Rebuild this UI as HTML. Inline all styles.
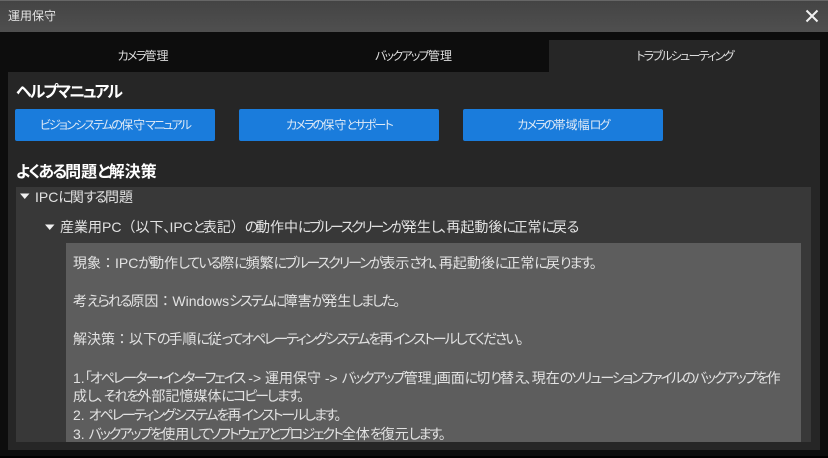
<!DOCTYPE html>
<html lang="ja"><head><meta charset="utf-8">
<style>
html,body{margin:0;padding:0;background:#000}
#w{position:relative;width:828px;height:458px;overflow:hidden;background:#0d0d0d;font-family:"Liberation Sans","Noto Sans CJK JP",sans-serif;font-feature-settings:"palt";color:#e0e0e0}
.b{position:absolute}
.t{position:absolute;white-space:nowrap;line-height:20px;height:20px}
.l{font-size:14px;color:#e2e2e2}
i{font-style:normal;letter-spacing:-2px}
u{text-decoration:none;font-feature-settings:"palt" 0}
.n i{letter-spacing:-2.3px}
.m i{letter-spacing:-2.06px}
.p i{letter-spacing:-1.95px}
.btn{position:absolute;top:109px;width:200px;height:32px;background:#1a7cdc;border-radius:2px;color:#dfeaf6;font-size:12px;line-height:32px;text-align:center;white-space:nowrap}
.tab{position:absolute;top:32px;height:40px;line-height:48px;font-size:12px;text-align:center;color:#ddd;white-space:nowrap}
.btn i{letter-spacing:-1.8px}
.tab i{letter-spacing:-1.7px}
.h{font-size:16px;font-weight:bold;color:#fff}
.h i{letter-spacing:-1.9px}
</style></head><body>
<div id="w">
<div class="b" style="left:0;top:0;width:828px;height:32px;background:linear-gradient(#444,#4f4f4f);border-top:1px solid #666;box-sizing:border-box"></div>
<div class="t" style="left:8px;top:6px;font-size:12px;color:#e4e4e4">運用保守</div>
<svg class="b" style="left:805px;top:9px" width="14" height="14" viewBox="0 0 14 14"><path d="M1.5 1.5L12.5 12.5M12.5 1.5L1.5 12.5" stroke="#f0f0f0" stroke-width="2" fill="none"/></svg>
<div class="tab" style="left:8px;width:270px"><i>カメラ</i>管理</div>
<div class="tab" style="left:278px;width:271px"><i>バックアップ</i>管理</div>
<div class="b" style="left:549px;top:40px;width:271px;height:32px;background:#262626"></div>
<div class="tab" style="left:549px;width:271px"><i>トラブルシューティング</i></div>
<div class="b" style="left:8px;top:72px;width:812px;height:378px;background:#262626"></div>
<div class="t h" style="left:16px;top:83px"><i>ヘルプマニュアル</i></div>
<div class="btn" style="left:15px"><i>ビジョンシステムの</i>保守<i>マニュアル</i></div>
<div class="btn" style="left:239px"><i>カメラの</i>保守<i>とサポート</i></div>
<div class="btn" style="left:463px"><i>カメラの</i>帯域幅<i>ログ</i></div>
<div class="t h" style="left:16px;top:163px"><i>よくある</i>問題<i>と</i>解決策</div>
<div class="b" style="left:16px;top:187px;width:795px;height:255px;background:#383838"></div>
<svg class="b" style="left:20px;top:193px" width="10" height="7"><path d="M0 .5H9.5L4.75 6Z" fill="#f0f0f0"/></svg>
<div class="t l" style="left:35px;top:187px">IPC<i>に</i>関<i>する</i>問題</div>
<svg class="b" style="left:45px;top:224px" width="10" height="7"><path d="M0 .5H9.5L4.75 6Z" fill="#f0f0f0"/></svg>
<div class="t l n" style="left:60px;top:217px">産業用PC<u>&#xFF08;</u>以下<span style="letter-spacing:-1px">&#x3001;</span>IPC<i>と</i>表記<u>&#xFF09;</u><i>の</i>動作中<i>にブルースクリーンが</i>発生<i>し</i><span style="letter-spacing:-1px">&#x3001;</span>再起動後<i>に</i>正常<i>に</i>戻<i>る</i></div>
<div class="b" style="left:66px;top:243px;width:735px;height:199px;background:#5d5d5d"></div>
<div class="t l" style="left:73px;top:253px">現象<u>&#xFF1A;</u>IPC<i>が</i>動作<i>している</i>際<i>に</i>頻繁<i>にブルースクリーンが</i>表示<i>され</i>&#x3001;再起動後<i>に</i>正常<i>に</i>戻<i>ります。</i></div>
<div class="t l" style="left:73px;top:291px">考<i>えられる</i>原因<u>&#xFF1A;</u>Windows<i>システムに</i>障害<i>が</i>発生<i>しました。</i></div>
<div class="t l m" style="left:73px;top:329px">解決策<u>&#xFF1A;</u>以下<i>の</i>手順<i>に</i>従<i>ってオペレーティングシステムを</i>再<i>インストールしてください。</i></div>
<div class="t l p" style="left:73px;top:368px">1.<i>「オペレーター・インターフェイス</i> -&gt; 運用保守 -&gt; <i>バックアップ</i>管理<i>」</i>画面<i>に</i>切<i>り</i>替<i>え</i>&#x3001;現在<i>のソリューションファイルのバックアップを</i>作</div>
<div class="t l" style="left:73px;top:386px">成<i>し</i>&#x3001;<i>それを</i>外部記憶媒体<i>にコピーします。</i></div>
<div class="t l" style="left:73px;top:405px">2. <i>オペレーティングシステムを</i>再<i>インストールします。</i></div>
<div class="t l" style="left:73px;top:424px">3. <i>バックアップを</i>使用<i>してソフトウェアとプロジェクト</i>全体<i>を</i>復元<i>します。</i></div>
<div class="b" style="left:0;top:456px;width:828px;height:2px;background:#000"></div>
</div>
</body></html>
